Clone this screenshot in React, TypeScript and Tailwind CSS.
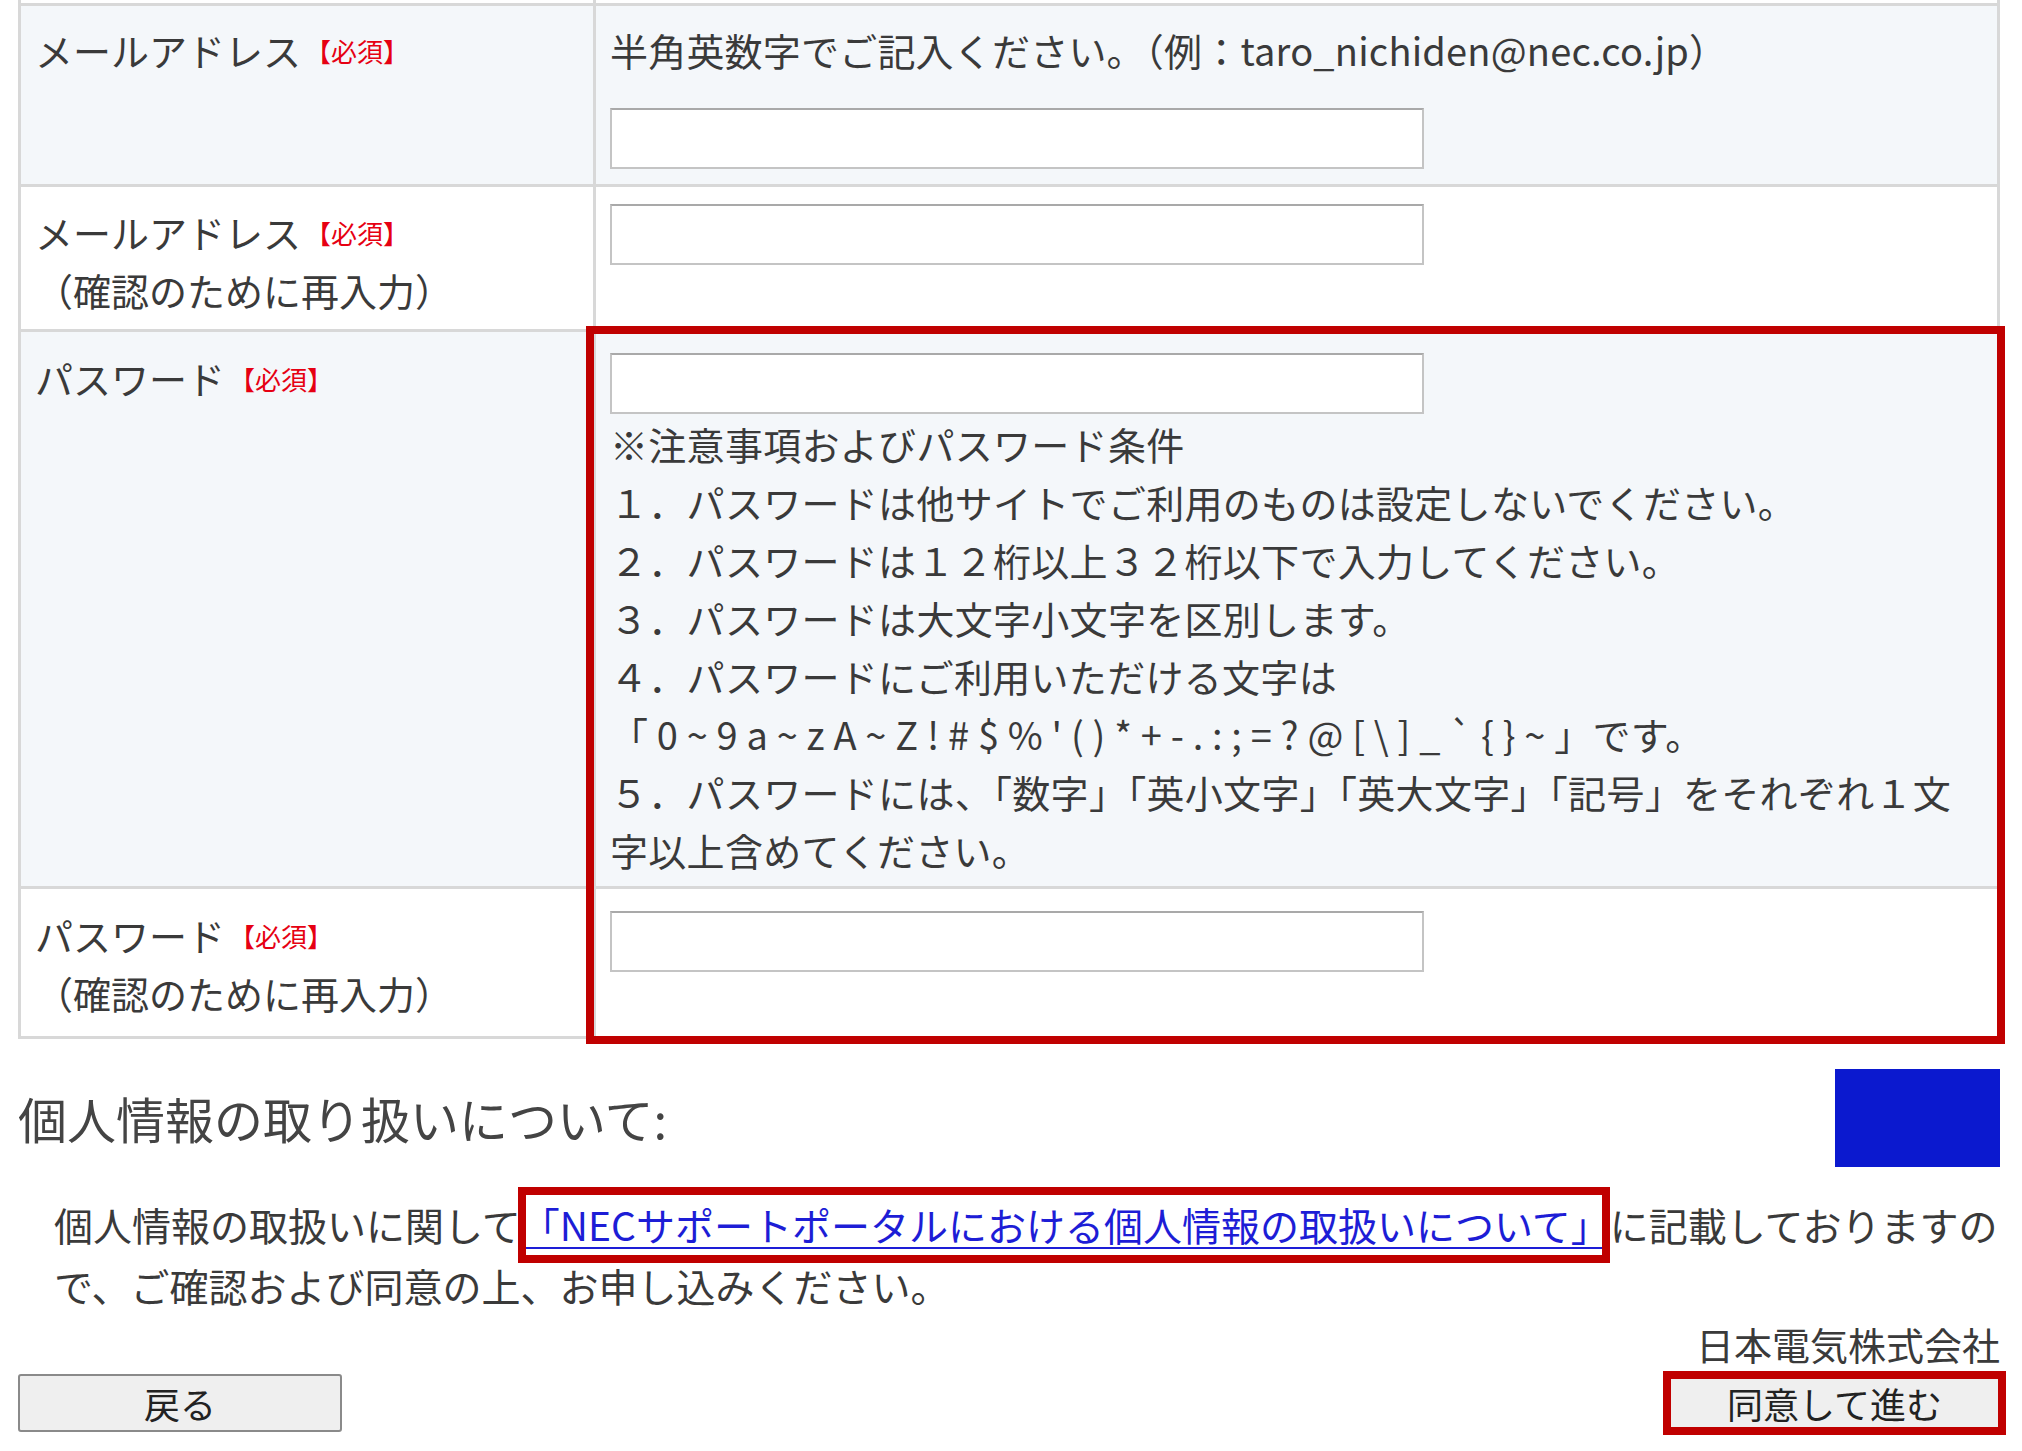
import React from "react";

const Req = () => (
  <span className="ml-[4px] inline-block align-[4px] text-[26px] leading-none text-[#e60012]">【必須】</span>
);

const Input = () => (
  <div className="h-[61px] w-[814px] border-2 border-[#c4c4c4] border-t-[#a9a9a9] bg-white" />
);

export default function App() {
  return (
    <div className="w-[2022px] min-h-[1451px] bg-white pl-[18px] pr-[22px] font-['Noto_Sans_CJK_JP',sans-serif] text-[38px] leading-[58px] text-[#3a3a3a]">
      {/* table */}
      <div className="relative">
        <div className="grid h-[3px] grid-cols-[575px_1fr] border-x-[3px] border-[#d8d8d8]">
          <div className="border-r-[3px] border-[#d8d8d8]" />
          <div />
        </div>
        <div className="border-[3px] border-[#d8d8d8]">
          {/* row 1 */}
          <div className="grid grid-cols-[575px_1fr] bg-[#f4f7fa]">
            <div className="border-r-[3px] border-[#d8d8d8] pl-[14px] pt-[15px] whitespace-nowrap">
              メールアドレス<Req />
            </div>
            <div className="pl-[14px] pt-[15px] pb-[15px]">
              <div className="whitespace-nowrap tracking-[0.2px]">半角英数字でご記入ください。（例：taro_nichiden@nec.co.jp）</div>
              <div className="mt-[29px]">
                <Input />
              </div>
            </div>
          </div>
          {/* row 2 */}
          <div className="grid grid-cols-[575px_1fr] border-t-[3px] border-[#d8d8d8] bg-white">
            <div className="border-r-[3px] border-[#d8d8d8] pl-[14px] pt-[16px] pb-[10px] whitespace-nowrap">
              <div>
                メールアドレス<Req />
              </div>
              <div>（確認のために再入力）</div>
            </div>
            <div className="pl-[14px] pt-[17px]">
              <Input />
            </div>
          </div>
          {/* row 3 */}
          <div className="grid grid-cols-[575px_1fr] border-t-[3px] border-[#d8d8d8] bg-[#f4f7fa]">
            <div className="border-r-[3px] border-[#d8d8d8] pl-[14px] pt-[17px] whitespace-nowrap">
              パスワード<Req />
            </div>
            <div className="pl-[14px] pt-[21px] pb-[7px] whitespace-nowrap tracking-[0.3px]">
              <Input />
              <div className="mt-[1px]">
                <div>※注意事項およびパスワード条件</div>
                <div>１．パスワードは他サイトでご利用のものは設定しないでください。</div>
                <div>２．パスワードは１２桁以上３２桁以下で入力してください。</div>
                <div>３．パスワードは大文字小文字を区別します。</div>
                <div>４．パスワードにご利用いただける文字は</div>
                <div>
                  <span className="tracking-[8.8px]">{"「0~9a~zA~Z!#$%'()*+-.:;=?@[\\]_`{}~"}</span>
                  <span>」です。</span>
                </div>
                <div>５．パスワードには、「数字」「英小文字」「英大文字」「記号」をそれぞれ１文</div>
                <div>字以上含めてください。</div>
              </div>
            </div>
          </div>
          {/* row 4 */}
          <div className="grid grid-cols-[575px_1fr] border-t-[3px] border-[#d8d8d8] bg-white">
            <div className="border-r-[3px] border-[#d8d8d8] pl-[14px] pt-[17px] pb-[14px] whitespace-nowrap">
              <div>
                パスワード<Req />
              </div>
              <div>（確認のために再入力）</div>
            </div>
            <div className="pl-[14px] pt-[22px]">
              <Input />
            </div>
          </div>
        </div>
        {/* red annotation box */}
        <div className="pointer-events-none absolute left-[568px] top-[326px] h-[718px] w-[1419px] border-[8px] border-[#c00000]" />
      </div>

      {/* heading */}
      <div className="mt-[30px] flex items-center justify-between">
        <h2 className="text-[49px] leading-[60px] text-[#444] whitespace-nowrap">個人情報の取り扱いについて:</h2>
        <div className="h-[98px] w-[165px] bg-[#0b19cf]" />
      </div>

      {/* paragraph */}
      <div className="mt-[27px] pl-[36px] text-[39px] leading-[61px] whitespace-nowrap">
        <div>
          個人情報の取扱いに関して
          <span className="relative inline-block">
            <a href="#" className="text-[#1d1dd6] underline decoration-2 underline-offset-[6px]">
              「NECサポートポータルにおける個人情報の取扱いについて」
            </a>
            <span className="pointer-events-none absolute -top-[7px] -bottom-[8px] -left-[3px] right-0 border-[8px] border-[#c00000]" />
          </span>
          に記載しておりますの
        </div>
        <div>で、ご確認および同意の上、お申し込みください。</div>
      </div>

      {/* company */}
      <div className="mt-[3px] text-right text-[38px] leading-[50px]">日本電気株式会社</div>

      {/* buttons */}
      <div className="mt-[2px] flex items-center justify-between">
        <button className="h-[58px] w-[324px] rounded-[3px] border-2 border-[#8a8a8a] bg-[#efefef] text-[36px] leading-none text-[#222]">
          戻る
        </button>
        <div className="-mr-[6px] border-[8px] border-[#c00000]">
          <button className="block h-[48px] w-[327px] bg-[#efefef] text-[36px] leading-none text-[#222]">
            同意して進む
          </button>
        </div>
      </div>
    </div>
  );
}
